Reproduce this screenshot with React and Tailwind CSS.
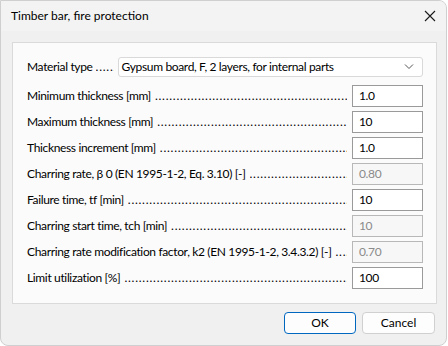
import React from "react";

const DOTS = ".".repeat(120);

function Row({ label, value, disabled }) {
  return (
    <div className="flex items-center h-[22px]">
      <span className="whitespace-nowrap">{label}</span>
      <span className="flex-1 overflow-hidden whitespace-nowrap ml-[4px] mr-[5px] tracking-[0.75px]">{DOTS}</span>
      <div
        className={
          "shrink-0 w-[71px] h-[22px] border flex items-center px-[6px] " +
          (disabled
            ? "bg-[#f7f7f7] border-[#b8b8b8] text-[#8a8a8a]"
            : "bg-white border-[#9a9a9a] text-black")
        }
      >
        {value}
      </div>
    </div>
  );
}

export default function App() {
  const rows = [
    ["Minimum thickness [mm]", "1.0", false],
    ["Maximum thickness [mm]", "10", false],
    ["Thickness increment [mm]", "1.0", false],
    ["Charring rate, β 0 (EN 1995-1-2, Eq. 3.10) [-]", "0.80", true],
    ["Failure time, tf [min]", "10", false],
    ["Charring start time, tch [min]", "10", true],
    ["Charring rate modification factor, k2 (EN 1995-1-2, 3.4.3.2) [-]", "0.70", true],
    ["Limit utilization [%]", "100", false],
  ];
  return (
    <div
      className="w-[447px] h-[346px] bg-[#f0f0f0] border border-[#cfcfcf] rounded-b-[8px] rounded-tr-[8px] overflow-hidden text-[12px] text-black"
      style={{ fontFamily: 'Lato, "Noto Sans", sans-serif' }}
    >
      <div className="h-[30px] bg-[#f3f3f3] flex items-center justify-between pl-[10px] pr-[9px]">
        <span className="text-[12px] text-black">Timber bar, fire protection</span>
        <svg width="12" height="12" viewBox="0 0 12 12" className="mr-[1px]">
          <path d="M1 1 L11 11 M11 1 L1 11" stroke="#1a1a1a" strokeWidth="1.1" fill="none" />
        </svg>
      </div>
      <div className="pl-[11px] pt-[11px]">
        <div className="w-[425px] h-[262px] bg-[#fbfbfb] border border-[#dadada] pl-[14px] pr-[13px] pt-[14px] tracking-[-0.35px]">
          <div className="flex items-center h-[20px]">
            <span className="whitespace-nowrap">Material type</span>
            <span className="w-[18px] overflow-hidden whitespace-nowrap ml-[3px] mr-[4px] tracking-[0.75px]">{DOTS}</span>
            <div className="flex-1 h-[20px] bg-white border border-[#d9d9d9] rounded-[3px] flex items-center justify-between pl-[3px] pr-[8px]">
              <span>Gypsum board, F, 2 layers, for internal parts</span>
              <svg width="10" height="6" viewBox="0 0 10 6">
                <path d="M1 0.5 L5 4.5 L9 0.5" stroke="#555" strokeWidth="1" fill="none" />
              </svg>
            </div>
          </div>
          <div className="flex flex-col gap-[4px] mt-[8px]">
            {rows.map(([l, v, d]) => (
              <Row key={l} label={l} value={v} disabled={d} />
            ))}
          </div>
        </div>
      </div>
      <div className="flex justify-end gap-[6px] pr-[11px] pt-[8px]">
        <button className="w-[72px] h-[22px] bg-[#fdfdfd] border border-[#0067c0] rounded-[4px] text-[12px]">OK</button>
        <button className="w-[73px] h-[22px] bg-[#fdfdfd] border border-[#d0d0d0] rounded-[4px] text-[12px]">Cancel</button>
      </div>
    </div>
  );
}
